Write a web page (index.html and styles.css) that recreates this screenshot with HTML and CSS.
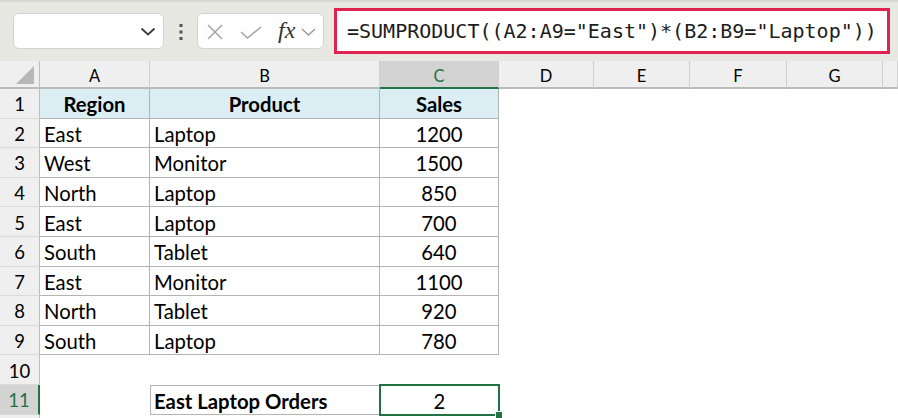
FILE: index.html
```html
<!DOCTYPE html>
<html lang="en">
<head>
  <meta charset="UTF-8" />
  <title>SUMPRODUCT - East Laptop Orders</title>
  <link rel="stylesheet" href="styles.css">
</head>
<body>

  <div class="toolbar">
    <div class="namebox">
      <svg class="chev" width="16" height="9" viewBox="0 0 16 9"><path d="M1.5 1.5 L8 7.5 L14.5 1.5" fill="none" stroke="#3c3c3c" stroke-width="1.8"/></svg>
    </div>
    <svg class="dots" width="6" height="18" viewBox="0 0 6 18">
      <rect x="1.5" y="1" width="3" height="3" fill="#555"/>
      <rect x="1.5" y="7.5" width="3" height="3" fill="#555"/>
      <rect x="1.5" y="14" width="3" height="3" fill="#555"/>
    </svg>
    <div class="fxbox">
      <svg class="ico-x" width="16" height="16" viewBox="0 0 16 16"><path d="M1 1 L15 15 M15 1 L1 15" stroke="#a4a4a4" stroke-width="1.5"/></svg>
      <svg class="ico-ok" width="22" height="13" viewBox="0 0 22 13"><path d="M1 6 L7.5 12 L21 1" fill="none" stroke="#a4a4a4" stroke-width="1.5"/></svg>
      <span class="fx">fx</span>
      <svg class="ico-chev" width="15" height="8" viewBox="0 0 15 8"><path d="M1 1 L7.5 7 L14 1" fill="none" stroke="#9a9a9a" stroke-width="1.4"/></svg>
    </div>
    <div class="formula">=SUMPRODUCT((A2:A9="East")*(B2:B9="Laptop"))</div>
  </div>

  <div class="sheet">
    <div class="row colhead">
      <div class="corner"><span class="tri"></span></div>
      <div class="ch">A</div>
      <div class="ch">B</div>
      <div class="ch sel">C</div>
      <div class="ch">D</div>
      <div class="ch">E</div>
      <div class="ch">F</div>
      <div class="ch">G</div>
      <div class="ch"></div>
    </div>

    <div class="row">
      <div class="rh">1</div>
      <div class="c t th">Region</div>
      <div class="c t th">Product</div>
      <div class="c t th">Sales</div>
    </div>
    <div class="row">
      <div class="rh">2</div>
      <div class="c t">East</div>
      <div class="c t">Laptop</div>
      <div class="c t num">1200</div>
    </div>
    <div class="row">
      <div class="rh">3</div>
      <div class="c t">West</div>
      <div class="c t">Monitor</div>
      <div class="c t num">1500</div>
    </div>
    <div class="row">
      <div class="rh">4</div>
      <div class="c t">North</div>
      <div class="c t">Laptop</div>
      <div class="c t num">850</div>
    </div>
    <div class="row">
      <div class="rh">5</div>
      <div class="c t">East</div>
      <div class="c t">Laptop</div>
      <div class="c t num">700</div>
    </div>
    <div class="row">
      <div class="rh">6</div>
      <div class="c t">South</div>
      <div class="c t">Tablet</div>
      <div class="c t num">640</div>
    </div>
    <div class="row">
      <div class="rh">7</div>
      <div class="c t">East</div>
      <div class="c t">Monitor</div>
      <div class="c t num">1100</div>
    </div>
    <div class="row">
      <div class="rh">8</div>
      <div class="c t">North</div>
      <div class="c t">Tablet</div>
      <div class="c t num">920</div>
    </div>
    <div class="row">
      <div class="rh">9</div>
      <div class="c t">South</div>
      <div class="c t">Laptop</div>
      <div class="c t num">780</div>
    </div>
    <div class="row">
      <div class="rh">10</div>
    </div>
    <div class="row">
      <div class="rh sel">11</div>
      <div class="c"></div>
      <div class="c box bold">East Laptop Orders</div>
      <div class="c num active">2<span class="handle"></span></div>
    </div>
    <div class="row">
      <div class="rh"></div>
    </div>
  </div>

</body>
</html>
```

FILE: styles.css
```css
body {
  margin: 0;
  width: 898px;
  height: 418px;
  overflow: hidden;
  background-color: #fff;
  font-family: 'Lato', 'Liberation Sans', sans-serif;
  color: #000;
}

/* formula bar */
.toolbar {
  height: 61px;
  box-sizing: border-box;
  background-color: #e6e8e1;
  border-top: 2px solid #d7d9d1;
  display: flex;
  align-items: center;
  padding-left: 13px;
}

.namebox {
  width: 151px;
  height: 36px;
  box-sizing: border-box;
  background-color: #fff;
  border: 1px solid #d3d4d0;
  border-radius: 6px;
  display: flex;
  align-items: center;
  justify-content: flex-end;
  padding-right: 7px;
  margin-top: -1px;
}

.dots {
  margin: 0 13px 0 14px;
}

.fxbox {
  width: 127px;
  height: 36px;
  box-sizing: border-box;
  background-color: #fff;
  border: 1px solid #d3d4d0;
  border-radius: 6px;
  display: flex;
  align-items: center;
  padding-left: 9px;
  margin-top: -1px;
}

.ico-x {
  margin-top: 1px;
}

.ico-ok {
  margin-left: 17px;
  margin-top: 2px;
}

.fx {
  margin-left: 16px;
  font-family: 'Liberation Serif', serif;
  font-style: italic;
  font-size: 24px;
  color: #333;
  line-height: 1;
  margin-top: -2px;
}

.ico-chev {
  margin-left: 6px;
  margin-top: 1px;
}

.formula {
  margin-left: 10px;
  width: 556px;
  height: 46px;
  box-sizing: border-box;
  background-color: #fff;
  border: 3px solid #e0234e;
  padding-left: 10px;
  display: flex;
  align-items: center;
  font-family: 'DejaVu Sans Mono', 'Liberation Mono', monospace;
  font-size: 20px;
  color: #1c1c1c;
  white-space: nowrap;
  margin-top: -1px;
}

/* grid */
.row {
  display: grid;
  grid-template-columns: 40px 110px 230px 119px 95px 96px 97px 96px 1fr;
  height: 29.6px;
}

.colhead {
  height: 28px;
}

.corner,
.ch {
  background-color: #efefef;
  border-bottom: 2px solid #bababa;
  box-sizing: border-box;
}

.corner {
  border-right: 1px solid #bdbdbd;
  position: relative;
}

.tri {
  position: absolute;
  right: 5px;
  bottom: 3px;
  width: 0;
  height: 0;
  border-left: 18px solid transparent;
  border-bottom: 18px solid #b7b7b7;
}

.ch {
  border-right: 1px solid #cfcfcf;
  display: flex;
  justify-content: center;
  align-items: center;
  padding-top: 3px;
  font-size: 16.5px;
}

.ch.sel {
  background-color: #d3d3d3;
  border-bottom-color: #217346;
  color: #217346;
}

.rh {
  background-color: #efefef;
  border-right: 1px solid #bdbdbd;
  border-bottom: 1px solid #d9d9d9;
  box-sizing: border-box;
  display: flex;
  justify-content: center;
  align-items: center;
  padding-top: 2px;
  font-size: 18.5px;
}

.rh.sel {
  background-color: #d3d3d3;
  border-right: 2px solid #217346;
  color: #217346;
}

.c {
  box-sizing: border-box;
  display: flex;
  align-items: center;
  padding: 2px 0 0 4px;
  font-size: 20.3px;
  white-space: nowrap;
}

.t {
  border-right: 1px solid #b4b4b4;
  border-bottom: 1px solid #b4b4b4;
}

.th {
  background-color: #daeef3;
  font-weight: bold;
  justify-content: center;
  padding-left: 0;
}

.num {
  justify-content: center;
  padding-left: 0;
}

.box {
  border: 1px solid #b4b4b4;
  padding-left: 3px;
}

.bold {
  font-weight: bold;
}

.active {
  position: relative;
}

.active::before {
  content: "";
  position: absolute;
  left: -1px;
  top: -1px;
  right: -1px;
  bottom: -1px;
  border: 2px solid #217346;
}

.handle {
  position: absolute;
  right: -4px;
  bottom: -4px;
  width: 6px;
  height: 6px;
  background-color: #217346;
  border: 1px solid #fff;
}
```
